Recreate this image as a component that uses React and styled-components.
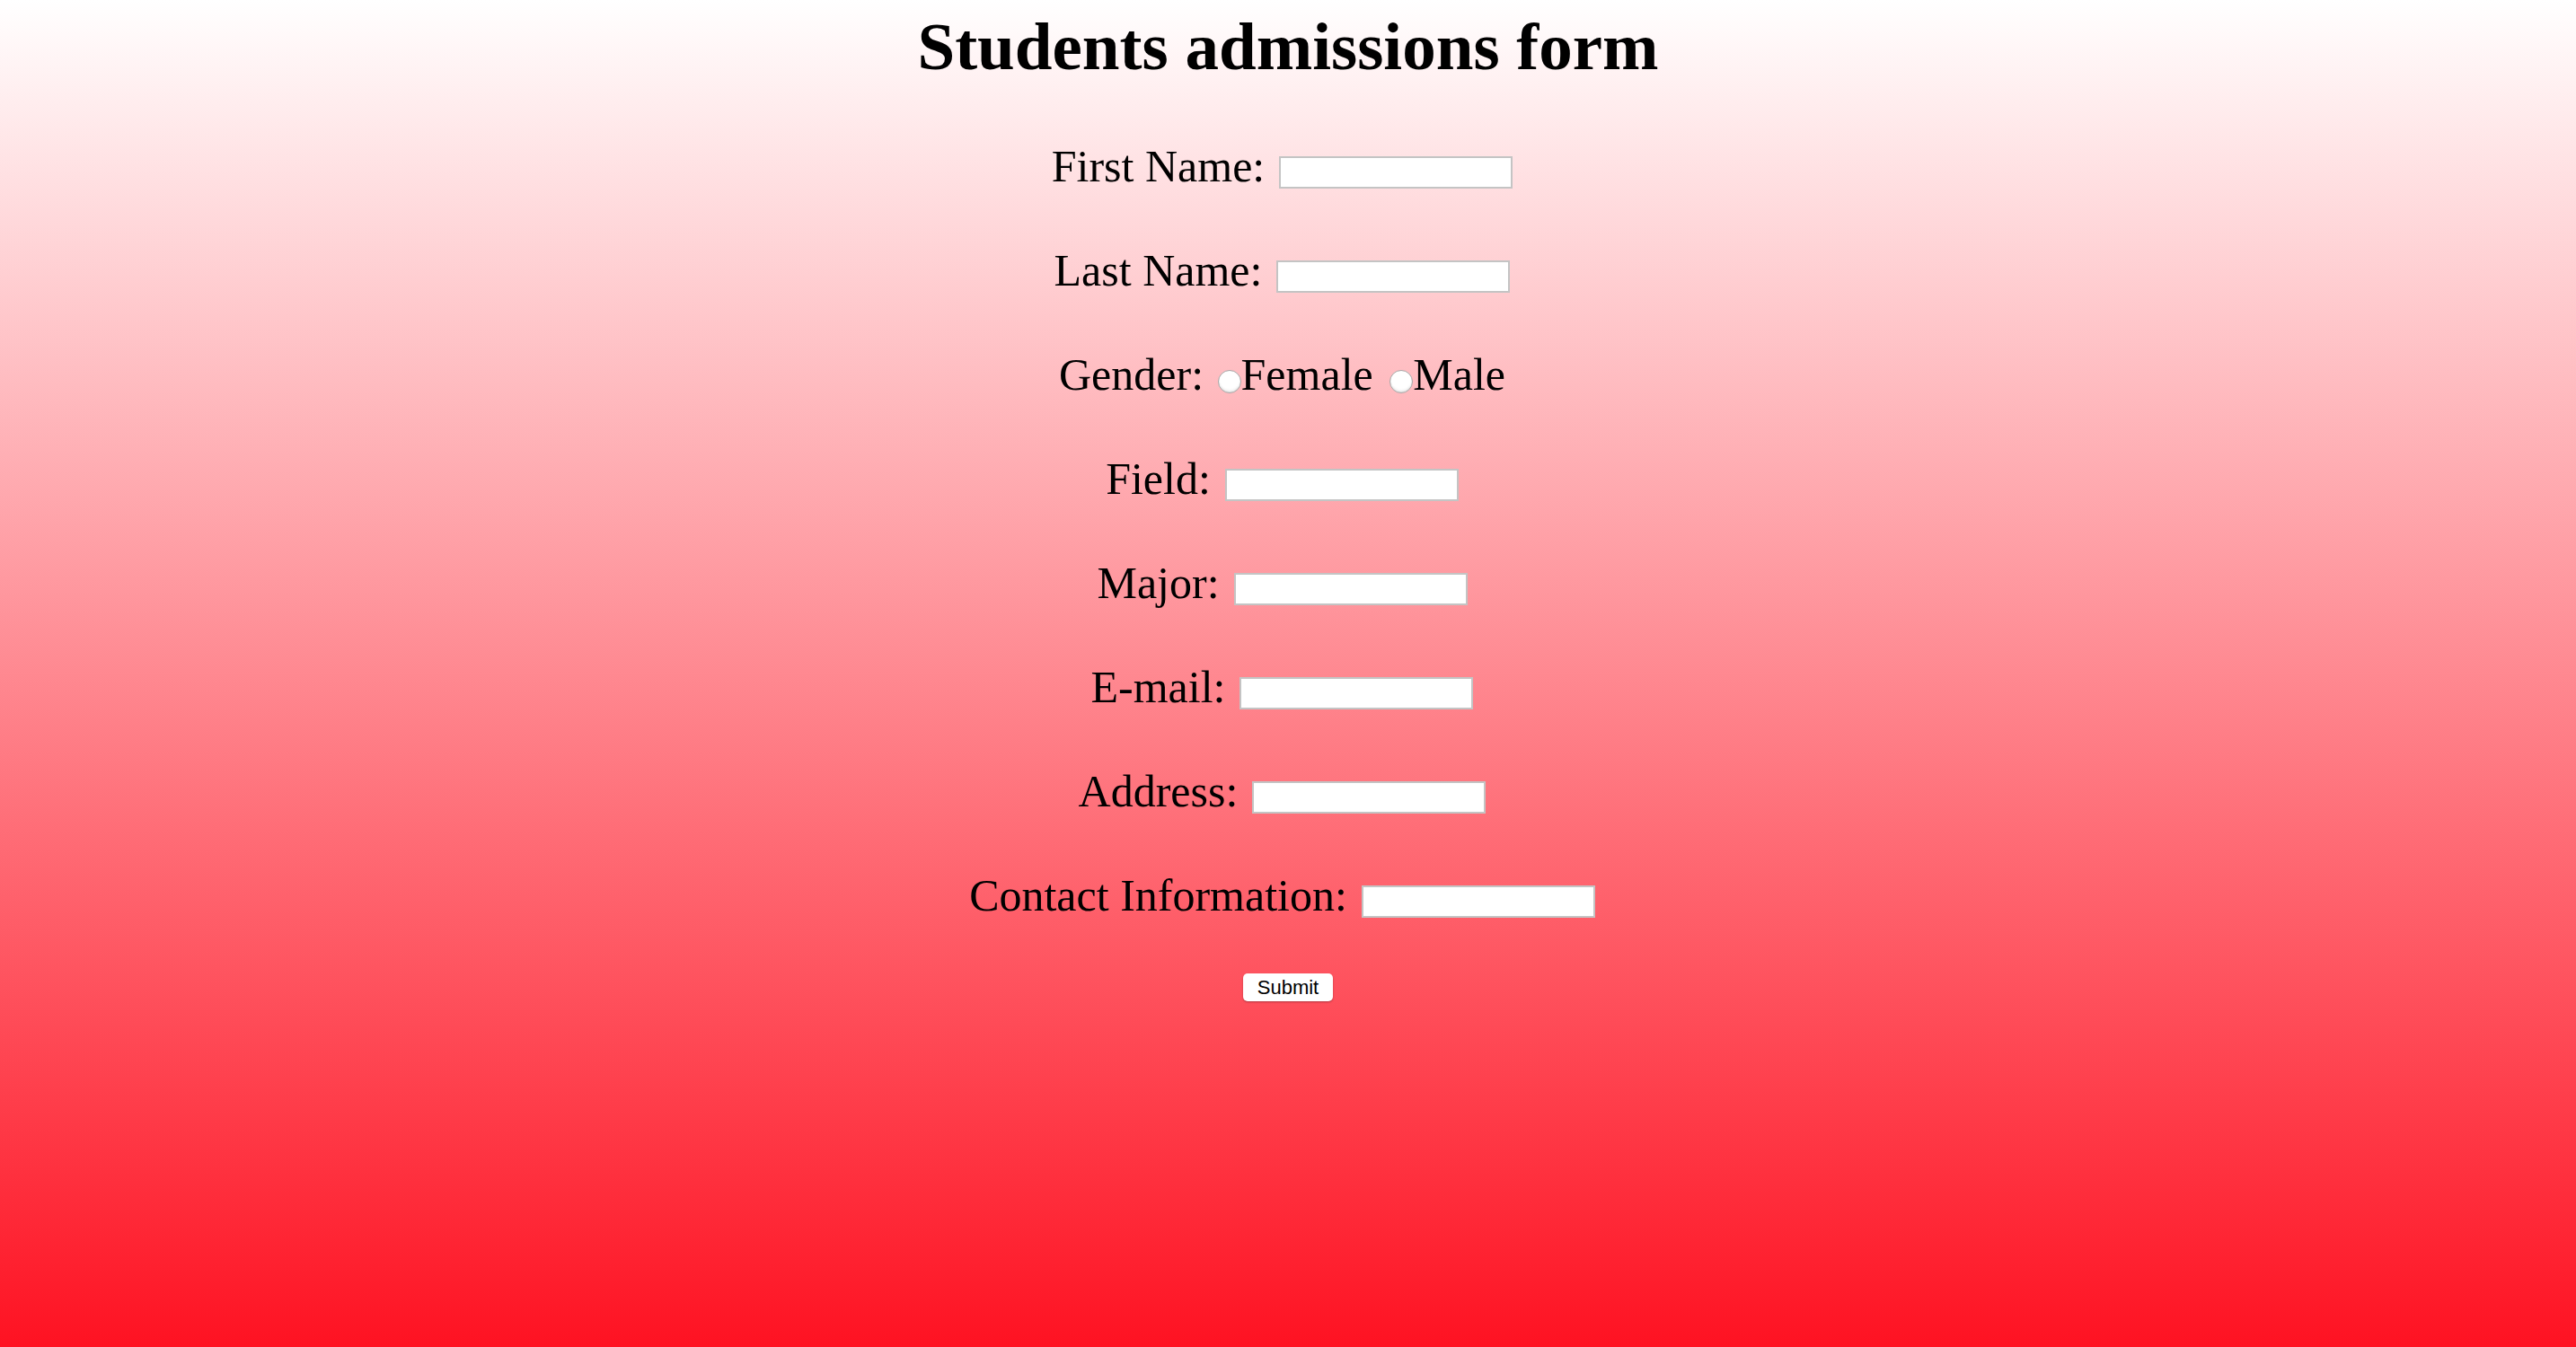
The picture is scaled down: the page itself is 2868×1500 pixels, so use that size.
import React from "react";
import styled, { createGlobalStyle } from "styled-components";

const GlobalStyle = createGlobalStyle`
  html, body {
    margin: 0;
    padding: 0;
  }
  body {
    font-family: "Liberation Serif", "Times New Roman", serif;
    color: #000;
  }
`;

const Page = styled.div`
  min-height: 100vh;
  background: linear-gradient(to bottom, #ffffff, #fe1222);
  text-align: center;
`;

const Title = styled.h1`
  margin: 0;
  padding-top: 8px;
  font-size: 75px;
  line-height: 88px;
  font-weight: bold;
`;

const Form = styled.form`
  display: flex;
  flex-direction: column;
  align-items: center;
  gap: 58px;
  padding-top: 60px;
`;

const Row = styled.div`
  display: flex;
  justify-content: center;
  align-items: center;
  height: 58px;
  font-size: 50px;
  line-height: 58px;
  padding-right: 13px;
  white-space: pre;
`;

const TextInput = styled.input`
  box-sizing: border-box;
  width: 260px;
  height: 36px;
  margin: 14px 0 0 16px;
  border: 2px solid #c4c4c4;
  background: #fff;
  padding: 0 6px;
  font-size: 22px;
  outline: none;
`;

const Radio = styled.input`
  appearance: none;
  box-sizing: border-box;
  width: 26px;
  height: 26px;
  margin: 15px 0 0 ${(p) => p.$gap}px;
  border: 1px solid #a9a9a9;
  border-radius: 50%;
  background: radial-gradient(circle at 50% 35%, #ffffff 55%, #e8e8e8 100%);
  box-shadow: inset 0 -1px 2px rgba(0, 0, 0, 0.1);
`;

const SubmitButton = styled.button`
  box-sizing: border-box;
  width: 100px;
  height: 31px;
  padding: 0;
  border: none;
  border-radius: 5px;
  background: #fff;
  box-shadow: 0 1px 2px rgba(0, 0, 0, 0.3);
  font-family: "Liberation Sans", Arial, sans-serif;
  font-size: 22px;
  color: #000;
`;

const fields = [
  "First Name:",
  "Last Name:",
  "Field:",
  "Major:",
  "E-mail:",
  "Address:",
  "Contact Information:",
];

const App = () => {
  return (
    <Page>
      <GlobalStyle />
      <Title>Students admissions form</Title>
      <Form onSubmit={(e) => e.preventDefault()}>
        {fields.slice(0, 2).map((label) => (
          <Row key={label}>
            <span>{label}</span>
            <TextInput type="text" />
          </Row>
        ))}
        <Row>
          <span>Gender: </span>
          <Radio type="radio" name="gender" $gap={3} />
          <span>Female </span>
          <Radio type="radio" name="gender" $gap={6} />
          <span>Male</span>
        </Row>
        {fields.slice(2).map((label) => (
          <Row key={label}>
            <span>{label}</span>
            <TextInput type="text" />
          </Row>
        ))}
        <SubmitButton type="submit">Submit</SubmitButton>
      </Form>
    </Page>
  );
};

export default App;
